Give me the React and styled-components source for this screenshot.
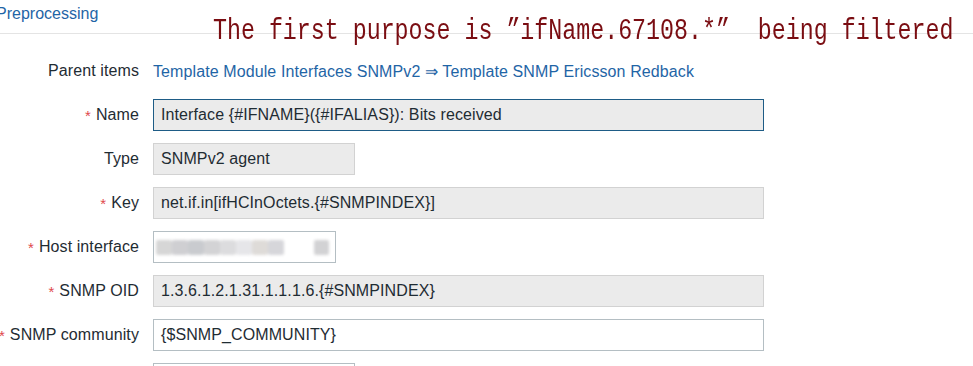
import React from 'react';
import styled, { createGlobalStyle } from 'styled-components';

const GlobalStyle = createGlobalStyle`
  html, body {
    margin: 0;
    padding: 0;
    background: #ffffff;
  }
  body {
    font-family: "Liberation Sans", Arial, sans-serif;
    color: #1f2c33;
    overflow: hidden;
  }
`;

const Page = styled.div`
  position: relative;
  width: 973px;
  height: 366px;
  overflow: hidden;
`;

const TabBar = styled.div`
  height: 33px;
  border-bottom: 1px solid #e4e4e4;
  display: flex;
  align-items: flex-start;
`;

const TabLink = styled.a`
  margin-left: -4px;
  margin-top: 5px;
  font-size: 16px;
  line-height: 18px;
  color: #1f65a6;
  text-decoration: none;
`;

const Annotation = styled.div`
  position: absolute;
  left: 213px;
  top: 16px;
  font-family: "Liberation Mono", "Courier New", monospace;
  font-size: 30px;
  line-height: 30px;
  color: #7a0d12;
  white-space: pre;
  transform: scaleX(0.776);
  transform-origin: left top;
`;

const Form = styled.div`
  display: grid;
  grid-template-columns: 139px 1fr;
  column-gap: 14px;
  row-gap: 12px;
  padding-top: 21px;
  align-items: center;
  letter-spacing: 0.1px;
`;

const Label = styled.div`
  height: 32px;
  display: flex;
  align-items: center;
  justify-content: flex-end;
  font-size: 16px;
  white-space: nowrap;
  color: #1f2c33;

  ${props => props.$required && `
    &::before {
      content: '*';
      color: #e0484b;
      margin-right: 5px;
      font-size: 15px;
    }
  `}
`;

const LinkLine = styled.div`
  font-size: 16px;
  color: #1f65a6;
  display: flex;
  align-items: center;
  height: 32px;
`;

const Field = styled.div`
  box-sizing: border-box;
  width: ${props => props.$width}px;
  height: 32px;
  margin-top: -1px;
  padding: 1px 7px 0;
  display: flex;
  align-items: center;
  font-size: 16px;
  color: #1f2c33;
  background: ${props => (props.$readonly ? '#ebebeb' : '#ffffff')};
  border: 1px solid ${props => (props.$focused ? '#1e5c86' : props.$readonly ? '#d2d2d2' : '#b4bec3')};
  white-space: nowrap;
  overflow: hidden;
`;

const Masked = styled.div`
  display: flex;
  align-items: center;
  filter: blur(1.5px);
`;

const MaskBlock = styled.span`
  display: inline-block;
  width: ${props => props.$w}px;
  height: 15px;
  margin-left: ${props => props.$gap || 0}px;
  background: ${props => props.$c};
  border-radius: 2px;
`;

const maskShades = ['#d6d6d6', '#cfcfd2', '#c9cbcf', '#d3d3d5', '#dcdcde', '#e6e6e9', '#dedbd8', '#d6d6da'];

const App = () => (
  <Page>
    <GlobalStyle />
    <TabBar>
      <TabLink>Preprocessing</TabLink>
    </TabBar>
    <Annotation>{'The first purpose is ”ifName.67108.*”  being filtered'}</Annotation>
    <Form>
      <Label>Parent items</Label>
      <LinkLine>Template Module Interfaces SNMPv2 ⇒ Template SNMP Ericsson Redback</LinkLine>

      <Label $required>Name</Label>
      <Field $width={611} $readonly $focused>Interface {'{#IFNAME}({#IFALIAS})'}: Bits received</Field>

      <Label>Type</Label>
      <Field $width={202} $readonly>SNMPv2 agent</Field>

      <Label $required>Key</Label>
      <Field $width={611} $readonly>net.if.in[ifHCInOctets.{'{#SNMPINDEX}'}]</Field>

      <Label $required>Host interface</Label>
      <Field $width={183} style={{ paddingLeft: 2 }}>
        <Masked>
          {maskShades.map((c, i) => (
            <MaskBlock key={i} $w={16} $c={c} />
          ))}
          <MaskBlock $w={15} $gap={30} $c="#d2d2d4" />
        </Masked>
      </Field>

      <Label $required>SNMP OID</Label>
      <Field $width={611} $readonly>1.3.6.1.2.1.31.1.1.1.6.{'{#SNMPINDEX}'}</Field>

      <Label $required>SNMP community</Label>
      <Field $width={611}>{'{$SNMP_COMMUNITY}'}</Field>

      <Label />
      <Field $width={202} />
    </Form>
  </Page>
);

export default App;
